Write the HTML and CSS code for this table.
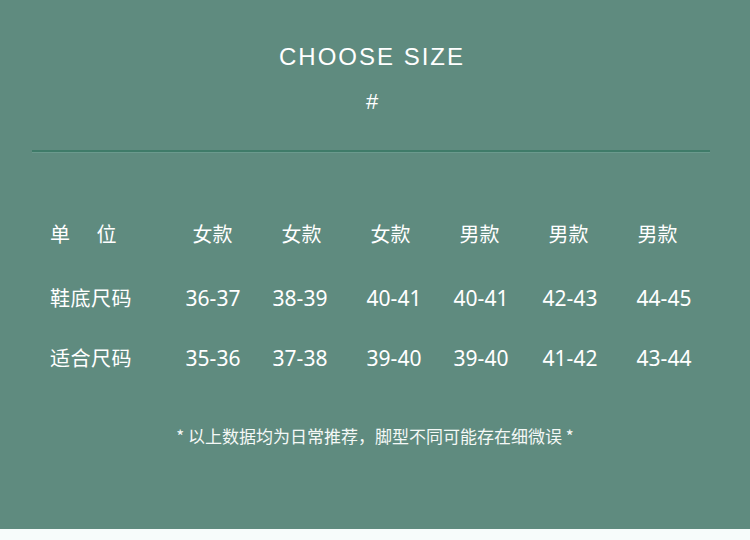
FILE: index.html
```html
<!DOCTYPE html>
<html lang="zh">
<head>
<meta charset="utf-8">
<link rel="stylesheet" href="styles.css">
</head>
<body>
<div class="panel">
  <header class="head">
    <h1 class="title">CHOOSE SIZE</h1>
    <div class="hash">#</div>
  </header>
  <div class="rule"></div>
  <div class="table">
    <div class="row row-head">
      <div class="label label-spaced"><span>单</span><span>位</span></div>
      <div class="cell cjk">女款</div>
      <div class="cell cjk">女款</div>
      <div class="cell cjk">女款</div>
      <div class="cell cjk">男款</div>
      <div class="cell cjk">男款</div>
      <div class="cell cjk">男款</div>
    </div>
    <div class="row row-num row-sole">
      <div class="label">鞋底尺码</div>
      <div class="cell num">36-37</div>
      <div class="cell num">38-39</div>
      <div class="cell num">40-41</div>
      <div class="cell num">40-41</div>
      <div class="cell num">42-43</div>
      <div class="cell num">44-45</div>
    </div>
    <div class="row row-num row-fit">
      <div class="label">适合尺码</div>
      <div class="cell num">35-36</div>
      <div class="cell num">37-38</div>
      <div class="cell num">39-40</div>
      <div class="cell num">39-40</div>
      <div class="cell num">41-42</div>
      <div class="cell num">43-44</div>
    </div>
  </div>
  <p class="note">* 以上数据均为日常推荐，脚型不同可能存在细微误 *</p>
</div>
<div class="foot"></div>
</body>
</html>
```

FILE: styles.css
```css
html, body {
  margin: 0;
  padding: 0;
}
body {
  width: 750px;
  height: 540px;
  overflow: hidden;
  background: #f7fcfb;
  color: #ffffff;
  font-family: "Noto Sans", "Noto Sans CJK SC", sans-serif;
}
.panel {
  height: 529px;
  background: #5f8b7f;
  display: flex;
  flex-direction: column;
  overflow: hidden;
}
.head {
  display: flex;
  flex-direction: column;
  align-items: center;
  padding-top: 42px;
  padding-right: 6px;
}
.title {
  margin: 0;
  font-family: "Liberation Sans", Arial, sans-serif;
  font-weight: normal;
  font-size: 24px;
  line-height: 30px;
  letter-spacing: 2px;
  color: #ffffff;
}
.hash {
  margin-top: 17px;
  font-family: "Liberation Sans", Arial, sans-serif;
  font-size: 22px;
  line-height: 26px;
  color: #ffffff;
}
.rule {
  margin: 35px 40px 0 32px;
  height: 2px;
  background: #3f7b69;
  box-shadow: 0 1px 0 rgba(120, 170, 155, 0.5);
}
.table {
  display: flex;
  flex-direction: column;
  padding-left: 50px;
  margin-top: 67px;
}
.row {
  display: grid;
  grid-template-columns: 118px repeat(6, 89px);
  align-items: center;
  height: 30px;
}
.row-num {
  grid-template-columns: 118px 90px 84px 104px 70px 108px 80px;
}
.row-sole {
  margin-top: 34px;
}
.row-fit {
  margin-top: 30px;
}
.label {
  font-family: "Noto Sans CJK SC", sans-serif;
  font-size: 20px;
  line-height: 30px;
  letter-spacing: 0.5px;
}
.label-spaced {
  display: flex;
  gap: 26px;
}
.cell {
  text-align: center;
  white-space: nowrap;
}
.cjk {
  font-family: "Noto Sans CJK SC", sans-serif;
  font-size: 20px;
  line-height: 30px;
}
.num {
  font-family: "Noto Sans", sans-serif;
  font-size: 21px;
  line-height: 30px;
}
.note {
  margin: 52px 0 0;
  text-align: center;
  font-family: "Noto Sans CJK SC", sans-serif;
  font-size: 17px;
  line-height: 22px;
  color: #f4f8f6;
}
.foot {
  height: 11px;
}
```
